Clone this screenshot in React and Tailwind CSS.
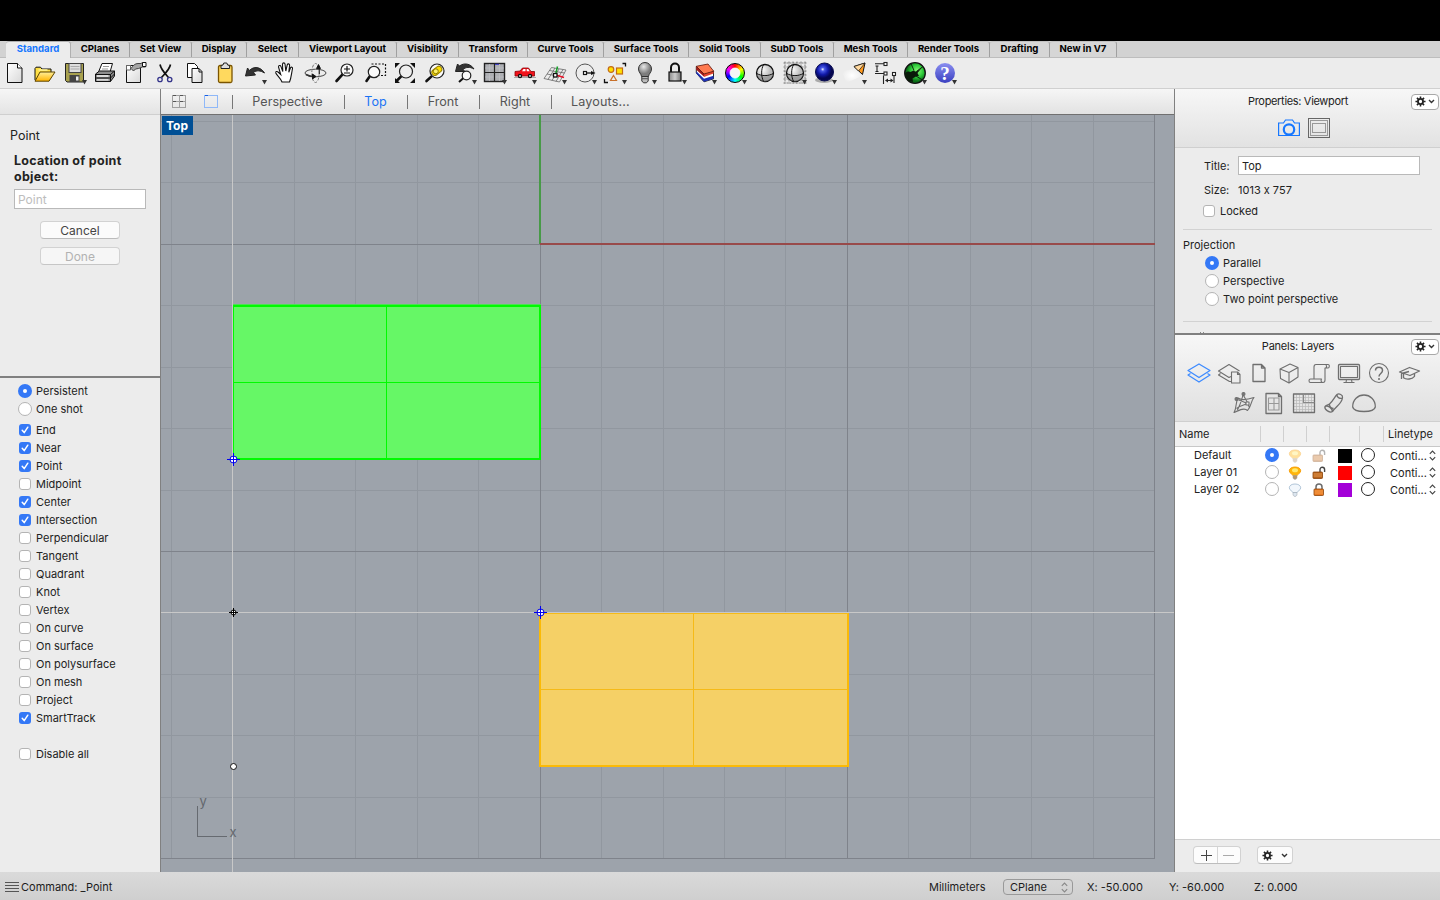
import React from "react";

const FONT = "font-['Inter','Liberation_Sans',sans-serif] [font-feature-settings:'calt'_0]";

/* ---------- toolbar glyphs, each drawn on a 30x30 cell ---------- */
const Drop = () => <path d="M22 22h5l-2.500 4.500z" fill="#333" />;
const Lens = ({ cx = 16, cy = 13, r = 6.300, fill = "#fafafa" }) => (
  <g>
    <path d={`M${cx - r * 0.700} ${cy + r * 0.700}L6.500 23`} stroke="#111" strokeWidth="2.600" strokeLinecap="round" />
    <circle cx={cx} cy={cy} r={r} fill={fill} stroke="#222" strokeWidth="1.200" />
  </g>
);
const Ball = () => (
  <g>
    <circle cx="15" cy="15" r="8.500" fill="url(#ballG)" stroke="#111" strokeWidth="1.300" />
    <path d="M7 16.500c5 2.500 11 2.500 16 0-.8 4-4 7-8 7s-7.200-3-8-7z" fill="#8c8c8c" opacity=".6" />
    <path d="M13.500 6.600c-2.500 5-2.500 11.500 0 16.800M6.700 15.500c5 2.800 11.500 2.800 16.600 0" stroke="#111" fill="none" strokeWidth="1" />
  </g>
);

const tools = [
  <g><path d="M7.500 5.500h10l4.500 4.500v14.500h-14.500z" fill="url(#pageG)" stroke="#111" /><path d="M17.500 5.500v4.500h4.500" fill="#fff" stroke="#111" /></g>,
  <g><path d="M5 22V10.500l1-1.300h4.500l1.500 1.800h9v4" fill="#ffe045" stroke="#111" /><path d="M5 23.200l5-9.200h15l-6 9.200z" fill="url(#foldG)" stroke="#5a4300" strokeLinejoin="round" /><path d="M8.500 12h9" stroke="#fff59a" strokeWidth="1.500" /></g>,
  <g><path d="M5.500 5.500h18v18.500H7L5.500 22.500z" fill="#a8a14f" stroke="#222" /><rect x="9" y="5.500" width="12" height="9" fill="#dedede" stroke="#444" /><path d="M10.500 8.500h9M10.500 11h9" stroke="#aaa" /><rect x="9.500" y="17" width="10" height="7" fill="#444" /><rect x="16" y="18.500" width="2.500" height="4" fill="#eee" /><Drop /></g>,
  <g><path d="M8.500 14l3.500-8.500h10.500l-2.500 8.500z" fill="#fff" stroke="#111" /><path d="M13 8.500h6M12 11h6" stroke="#999" /><path d="M5.500 16l4-3h15v5l-4 5.500h-15z" fill="#8d8d8d" stroke="#111" /><path d="M5.500 16.500h15l4-3.500M20.500 16.500v7M5.500 20h15l4-4" stroke="#111" fill="none" /><path d="M7 18h11.500M7 21.800h11.500" stroke="#f5f5f5" strokeWidth="1.300" /></g>,
  <g><path d="M6.500 7.500h14v17h-14z" fill="url(#pageG)" stroke="#111" /><path d="M6.500 7.500h4v4.500h-4z" fill="#fff" stroke="#666" /><path d="M11 10.500c2-3 4-5 7-5h3l1.500-1h3v4.500h-3l-4 1.500-3 .5-2 2z" fill="#a5a5a5" stroke="#444" /><path d="M22.500 4.500h3.500v4h-3.500z" fill="#fff" stroke="#111" /></g>,
  <g fill="none"><path d="M10 6.500c1 5 4.500 8.500 8.500 13M20.500 6.500c-1 5-5 8.500-9 13" stroke="#111" strokeWidth="1.700" /><circle cx="10" cy="21.500" r="2.200" stroke="#34348a" strokeWidth="1.300" /><circle cx="19.700" cy="21.500" r="2.200" stroke="#34348a" strokeWidth="1.300" /></g>,
  <g><path d="M7.500 5.500h7l3 3v11h-10z" fill="#fff" stroke="#111" /><path d="M12 10.500h7l3 3v11h-10z" fill="url(#pageG)" stroke="#111" /><path d="M19 10.500v3.500h3" fill="none" stroke="#111" /></g>,
  <g><rect x="8.500" y="7.500" width="13.500" height="17" rx="1.500" fill="#ffd95e" stroke="#7b5500" strokeWidth="1.300" /><path d="M11 10.500V7.500l2-.5.800-2h3l.8 2 2 .5v3z" fill="#ddd" stroke="#222" /></g>,
  <g><path d="M5.500 18l2-8 2 2.500c4-4.500 11-4 15 2.500-4-2.500-8-3-11-.5l2 2.500z" fill="#333" stroke="#222" /><Drop /></g>,
  <g><path d="M12 24c-1-3.500-5-6.500-6.200-9-.4-1.400 1.200-2 2.200-1l2.700 2.500L8.500 9c0-1.700 2-2 2.500-.4l1.800 5L12.500 6c.2-1.500 2.300-1.500 2.500 0l.8 7 1.500-6.300c.5-1.400 2.400-1 2.300.5l-.8 7 1.700-4.500c.7-1.200 2.300-.5 2 .8-1 4.500-1.200 9.500-3 13.500z" fill="#fff" stroke="#111" strokeWidth="1.100" /></g>,
  <g fill="none" stroke="#333"><ellipse cx="15.500" cy="15" rx="10.500" ry="3.800" strokeWidth=".9" /><ellipse cx="15.500" cy="15" rx="3.700" ry="9.500" stroke="#777" strokeDasharray="3 1.500" /><path d="M6 16.500c3 1.800 6 2.200 9 2.200" strokeWidth="1.500" /><path d="M12.500 16v5l3.500-2.500zM18.500 6.500l2 4h-4zM19.300 10v6" fill="#111" stroke="#111" strokeWidth=".9" /></g>,
  <g><Lens cx={17} cy={12} r={6} /><path d="M14 11h6M17 8v5.500M14 15h6" stroke="#111" strokeWidth="1.200" /></g>,
  <g><path d="M11.500 6h14v11.500H14" fill="none" stroke="#111" strokeDasharray="2 1.500" strokeWidth="1.200" /><Lens cx={14} cy={14} r={5.700} /></g>,
  <g><path d="M5 10V5h5zM20 5h5v5zM5 20v5h5zM25 20v5h-5z" fill="#111" /><Lens cx={16} cy={13.500} r={6.500} fill="#eee" /></g>,
  <g><Lens cx={17} cy={13} r={7} /><rect x="11.500" y="9.800" width="11" height="6" rx="3" fill="#ffe000" stroke="#9a8200" transform="rotate(-38 17 13)" /><circle cx="15.800" cy="13.300" r="2.500" fill="#fff36b" stroke="#8f7a00" /></g>,
  <g><path d="M5.500 13.500l2-7.500 2 2c4.500-3.500 11-2.500 14.500 3-4.500-2.500-8-2-11 .5l2 2z" fill="#333" stroke="#222" /><path d="M13.500 20l-4.500 4" stroke="#111" strokeWidth="2" /><circle cx="16.500" cy="17.500" r="4.300" fill="#fafafa" stroke="#222" strokeWidth="1.200" /><Drop /></g>,
  <g><rect x="4.500" y="5.500" width="20" height="18" fill="#aeb0b4" stroke="#222" strokeWidth="1.400" /><path d="M9.500 6v17M19.500 6v17M5 10h19M5 19h19" stroke="#c0c2c6" strokeWidth=".7" /><path d="M14.500 5.500v18M4.500 14.500h20" stroke="#222" strokeWidth="1.200" /><path d="M15 6.300h4" stroke="#3434d0" /><Drop /></g>,
  <g><path d="M4 19.500h22" stroke="#aaa" /><path d="M5 18v-4.500l5-.5 2.500-3h6l2.500 3.500h3.500V18z" fill="#f1121b" stroke="#8d0005" strokeWidth=".8" /><path d="M12 13.200l1.500-2.200h2v2.200zM16.700 11h1.500l1.500 2.200h-3z" fill="#fff" /><circle cx="10" cy="18" r="2.200" fill="#111" /><circle cx="20" cy="18" r="2.200" fill="#111" /><circle cx="10" cy="18" r=".9" fill="#ddd" /><circle cx="20" cy="18" r=".9" fill="#ddd" /><Drop /></g>,
  <g fill="none"><path d="M11.500 9.500L26 12l-6.500 12L4 20.500zM9.500 12.500l15 2.500M7 16l15.500 3M15 10l-7 11.500M19 11l-7 11.500M23 11.500L16 23.500" stroke="#666" strokeWidth=".8" /><path d="M15.500 17l2-8.500" stroke="#16a12a" strokeWidth="1.500" /><path d="M16 17l8 2.500" stroke="#e8142a" strokeWidth="1.600" /><rect x="13.500" y="15.500" width="3.500" height="3.500" fill="#fff" stroke="#111" strokeWidth="1.300" /><Drop /></g>,
  <g><circle cx="15" cy="15" r="9" fill="none" stroke="#555" /><rect x="13.500" y="13.500" width="3" height="3" fill="#fff" stroke="#111" strokeWidth="1.200" /><path d="M17 15h5" stroke="#111" strokeWidth="1.300" /><path d="M21 13l4.500 2-4.500 2z" fill="#111" /><Drop /></g>,
  <g fill="none"><path d="M22.500 5.500h3v3M4.500 21v3.500h3.500" stroke="#111" strokeWidth="1.300" /><circle cx="11" cy="11.500" r="2.800" fill="#ffe000" stroke="#c36a14" strokeWidth="1.200" /><rect x="16.500" y="10" width="6" height="6" fill="#ffe000" stroke="#c36a14" strokeWidth="1.200" /><path d="M13.500 17.500l3 5h-6z" stroke="#c8702a" strokeWidth="1.200" /><Drop /></g>,
  <g><path d="M11.500 18.500c0-2.500-3-4-3-7.500a6.500 6.500 0 0113 0c0 3.500-3 5-3 7.500z" fill="url(#bulbG)" stroke="#333" /><path d="M11.800 18.500h6.400v4.500l-1.700 1.800h-3l-1.700-1.800z" fill="#bbb" stroke="#333" /><path d="M12 20.700h6" stroke="#555" /><Drop /></g>,
  <g><path d="M11 14v-4.500a4 4 0 018 0V14" fill="none" stroke="#111" strokeWidth="2" /><rect x="9" y="14" width="12" height="9" fill="url(#lockG)" stroke="#111" strokeWidth="1.200" /><Drop /></g>,
  <g strokeLinejoin="round"><path d="M6.300 8.500v6.500l7.700 8.800 9.500-3V13l-9.500 3z" fill="#fff" stroke="#111" strokeWidth=".9" /><path d="M6.300 8.500v3.200l7.700 7 .3-2.800z" fill="#a31919" /><path d="M14 16l9.500-2.800v2.300L14 19z" fill="#e3402c" /><path d="M6.300 13.300l7.700 7.400 9.500-3v3L14 23.800 6.300 15.500z" fill="#1d2fb5" /><path d="M6.300 8.300L18 6l5.700 7.200L14 16z" fill="#ff7a50" stroke="#5a1208" strokeWidth=".8" /><Drop /></g>,
  <g><foreignObject x="5" y="5" width="20" height="20"><div className="h-5 w-5 rounded-full border border-black bg-[conic-gradient(red,#ff0,#0f0,#0ff,#00f,#f0f,red)]" /></foreignObject><circle cx="15" cy="15" r="5" fill="#f6f6f6" stroke="#fff" strokeWidth=".8" /><Drop /></g>,
  <Ball />,
  <g><path d="M5 3.500v22M9 3.500v22M13 3.500v22M17 3.500v22M21 3.500v22M25 3.500v22M3.500 5h23M3.500 9h23M3.500 13h23M3.500 17h23M3.500 21h23M3.500 25h23" stroke="#666" strokeWidth=".8" strokeDasharray="2 1" /><Ball /><Drop /></g>,
  <g><ellipse cx="14" cy="22" rx="9" ry="3" fill="#aaa" /><circle cx="14.500" cy="14" r="9" fill="url(#blueG)" stroke="#060a50" /><Drop /></g>,
  <g><path d="M20 10L2 13l4 12 16-7z" fill="url(#beamG)" /><path d="M14 8.500l11-3.500-2.500 11.500z" fill="#ff9a1e" stroke="#111" strokeLinejoin="round" /><path d="M14 8.500l11-3.500-6.500 8z" fill="#ffd9a0" stroke="#111" strokeWidth=".7" /><Drop /></g>,
  <g fill="none" stroke="#222" strokeWidth="1.100"><path d="M5 5.800h9M5 15.500h10M7 8v5.500M5.500 8h3M5.500 13.500h3M13.500 17.500V26M24 17.500V25M16 22.500h6" /><rect x="14" y="4.500" width="3" height="3" fill="#fff" /><rect x="14" y="14" width="3" height="3" fill="#fff" /><rect x="22.500" y="14.500" width="3" height="3" fill="#fff" /><path d="M18 20.500l-3 2 3 2zM20.500 20.500l3 2-3 2z" fill="#222" stroke="none" /></g>,
  <g><circle cx="15" cy="15" r="10.300" fill="url(#greenG)" stroke="#111" strokeWidth="1.300" /><path d="M5 15c1.500-1.500 4-2 5.500-1l3-1.500 2.500 1.500 6-4.500-4.500 5.500 1.500 3-3 .5c-1 1-2.500 1-3.500 2l.5 3.500-4.500-1c-2-2-3.500-5-3.500-8z" fill="#0a1a0a" /><path d="M11 5.500l3 7M23 8.500l-8 6M16 18l6.500 4" stroke="#0a1a0a" strokeWidth=".9" /><Drop /></g>,
  <g><circle cx="15" cy="15" r="10" fill="url(#helpG)" /><text x="15" y="21.500" textAnchor="middle" fontSize="19" fontWeight="bold" fill="#fff" fontFamily="Liberation Serif, serif">?</text><Drop /></g>,
];

const Defs = () => (
  <svg className="absolute h-0 w-0">
    <defs>
      <linearGradient id="pageG" x2="1" y2="1"><stop stopColor="#fff" /><stop offset="1" stopColor="#d8d8d8" /></linearGradient>
      <linearGradient id="foldG" x2="0" y2="1"><stop stopColor="#fff09a" /><stop offset="1" stopColor="#ffb400" /></linearGradient>
      <linearGradient id="lockG" x2="1"><stop stopColor="#8a8a8a" /><stop offset=".5" stopColor="#ccc" /><stop offset="1" stopColor="#777" /></linearGradient>
      <radialGradient id="bulbG" cx=".4" cy=".3"><stop stopColor="#e8e8e8" /><stop offset="1" stopColor="#7d7d7d" /></radialGradient>
      <radialGradient id="ballG" cx=".35" cy=".3"><stop stopColor="#fff" /><stop offset="1" stopColor="#bbb" /></radialGradient>
      <radialGradient id="blueG" cx=".4" cy=".35"><stop stopColor="#f3f6ff" /><stop offset=".2" stopColor="#4a5be8" /><stop offset=".6" stopColor="#1019a8" /><stop offset="1" stopColor="#04064e" /></radialGradient>
      <radialGradient id="beamG"><stop stopColor="#fff" /><stop offset="1" stopColor="#ececec" /></radialGradient>
      <radialGradient id="greenG" cx=".6" cy=".4"><stop stopColor="#8dff7a" /><stop offset=".6" stopColor="#2cc838" /><stop offset="1" stopColor="#0b6d18" /></radialGradient>
      <linearGradient id="helpG" x2="0" y2="1"><stop stopColor="#8a8ef0" /><stop offset="1" stopColor="#3a3fc0" /></linearGradient>
    </defs>
  </svg>
);

/* ---------- ribbon tabs ---------- */
const tabs = [
  ["Standard", "w-[65px]"], ["CPlanes", "w-[59px]"], ["Set View", "w-[62px]"], ["Display", "w-[55px]"],
  ["Select", "w-[52px]"], ["Viewport Layout", "w-[98px]"], ["Visibility", "w-[62px]"], ["Transform", "w-[69px]"],
  ["Curve Tools", "w-[76px]"], ["Surface Tools", "w-[85px]"], ["Solid Tools", "w-[72px]"], ["SubD Tools", "w-[73px]"],
  ["Mesh Tools", "w-[74px]"], ["Render Tools", "w-[82px]"], ["Drafting", "w-[60px]"], ["New in V7", "w-[67px]"],
];

const TabBar = () => (
  <div className="flex h-[17px] border-b border-[#bdbdbd] bg-[#d2d2d2] pl-[6px]">
    {tabs.map(([t, w], i) => (
      <div
        key={t}
        className={`${w} flex shrink-0 items-start justify-center whitespace-nowrap rounded-t-[3px] border-r border-t text-[9.600px] font-bold leading-[14px] ${
          i === 0 ? "h-[17px] border-[#b0b0b0] bg-[#ececec] text-[#1677ff]" : "h-4 border-t-[#c2c2c2] border-r-[#a0a0a0] bg-[#d6d6d6] text-black"
        }`}
      >
        {t}
      </div>
    ))}
  </div>
);

const Toolbar = () => (
  <div className="flex h-[31px] border-b border-[#d0d0d0] bg-[#ececec]">
    {tools.map((g, i) => (
      <svg key={i} className="h-[30px] w-[30px] shrink-0" viewBox="0 0 30 30" fill="none">{g}</svg>
    ))}
  </div>
);

/* ---------- form controls ---------- */
const Radio = ({ on, className = "" }) => (
  <span className={`flex h-[14px] w-[14px] shrink-0 items-center justify-center rounded-full ${on ? "bg-[#3478f6]" : "border border-[#b4b4b4] bg-white"} ${className}`}>
    {on && <span className="h-1 w-1 rounded-full bg-white" />}
  </span>
);
const Check = ({ on }) => (
  <span className={`flex h-3 w-3 shrink-0 items-center justify-center rounded-[3px] ${on ? "bg-[#3478f6]" : "border border-[#b4b4b4] bg-white"}`}>
    {on ? (
      <svg className="h-3 w-3" viewBox="0 0 12 12" fill="none"><path d="M3.200 6.300l2 2.300 3.600-5.400" stroke="#fff" strokeWidth="1.500" strokeLinecap="round" strokeLinejoin="round" /></svg>
    ) : null}
  </span>
);
const Gear = ({ className = "" }) => (
  <svg className={`h-[11px] w-[11px] ${className}`} viewBox="0 0 12 12" fill="none" stroke="#222">
    <circle cx="6" cy="6" r="2.800" strokeWidth="2" />
    <path d="M6 .5v2M6 9.500v2M.5 6h2M9.500 6h2M2.100 2.100l1.500 1.500M8.400 8.400l1.500 1.500M2.100 9.900l1.500-1.500M8.400 3.600l1.500-1.500" strokeWidth="1.700" />
  </svg>
);
const Chev = () => (
  <svg className="h-[5px] w-[7px]" viewBox="0 0 7 5" fill="none"><path d="M1 1l2.500 2.500L6 1" stroke="#333" strokeWidth="1.400" /></svg>
);
const GearMenu = () => (
  <span className="flex h-[16px] w-[28px] items-center justify-center gap-[2px] rounded-[4px] border border-[#a8a8a8] bg-white pr-px"><Gear /><Chev /></span>
);
const UpDown = ({ className = "" }) => (
  <svg className={`h-[11px] w-[7px] shrink-0 ${className}`} viewBox="0 0 7 11" fill="none" stroke="currentColor" strokeWidth="1.100"><path d="M.8 3.800L3.500 1l2.700 2.800M.8 7.200L3.500 10l2.700-2.800" /></svg>
);

/* ---------- left sidebar ---------- */
const snaps = [
  ["End", true], ["Near", true], ["Point", true], ["Midpoint", false], ["Center", true], ["Intersection", true], ["Perpendicular", false],
  ["Tangent", false], ["Quadrant", false], ["Knot", false], ["Vertex", false], ["On curve", false], ["On surface", false],
  ["On polysurface", false], ["On mesh", false], ["Project", false], ["SmartTrack", true],
];

const SnapRow = ({ label, on }) => (
  <div className="flex h-[18px] items-center gap-[5px] pl-[19px] text-[11px]"><Check on={on} />{label}</div>
);

const LeftSide = () => (
  <aside className="flex w-[161px] shrink-0 flex-col border-r border-[#808080] bg-[#ececec] text-[#222]">
    <div className="h-[26px] shrink-0 border-b border-[#cfcfcf] bg-gradient-to-b from-[#f6f6f6] to-[#e4e4e4]" />
    <div className="flex h-[261px] shrink-0 flex-col">
      <div className="mt-[13px] h-4 pl-[10px] text-[12.500px] leading-4">Point</div>
      <div className="mt-[9px] pl-[14px] text-[12.500px] font-bold leading-4 tracking-[0.280px]">Location of point<br />object:</div>
      <div className="ml-[14px] mt-1 flex h-5 w-[132px] items-center border border-[#b9b9b9] bg-white pl-[3px] pt-px text-[12px] text-[#bdbdbd]">Point</div>
      <div className="mt-3 flex flex-col items-center gap-2 text-[12px] text-[#444]">
        <button className="h-[18px] w-20 rounded-[4px] border border-[#d2d2d2] border-b-[#bcbcbc] bg-[#fbfbfb] pt-px leading-4">Cancel</button>
        <button className="h-[18px] w-20 rounded-[4px] border border-[#d2d2d2] border-b-[#c6c6c6] bg-[#f6f6f6] pt-px leading-4 text-[#b2b2b2]">Done</button>
      </div>
    </div>
    <div className="h-[2px] shrink-0 bg-[#808080]" />
    <div className="flex flex-col pt-1">
      {["Persistent", "One shot"].map((t, i) => (
        <div key={t} className="flex h-[18px] items-center gap-1 pl-[18px] text-[11px]"><Radio on={i === 0} />{t}</div>
      ))}
      <div className="h-[3px]" />
      {snaps.map(([t, on]) => <SnapRow key={t} label={t} on={on} />)}
      <div className="h-[18px]" />
      <SnapRow label="Disable all" on={false} />
    </div>
  </aside>
);

/* ---------- viewport ---------- */
const minorX = [10, 133, 194, 256, 317, 440, 502, 563, 624, 747, 809, 870, 932];
const minorY = [6, 67, 190, 252, 313, 375, 497, 559, 620, 682];

const Snap = ({ x, y, c, r, a }) => (
  <g stroke={c} fill="none" shapeRendering="crispEdges">
    <circle cx={x} cy={y} r={r} fill="#fff" shapeRendering="auto" />
    <path d={`M${x - a} ${y}h${2 * a}M${x} ${y - a}v${2 * a}`} />
  </g>
);

const Viewport = () => (
  <div className="relative h-[757px] overflow-hidden bg-[#9da3ab]">
    <svg className="block h-[757px] w-[1013px]" viewBox="0 0 1013 757" fill="none">
      <g shapeRendering="crispEdges">
        {minorX.map((x) => <path key={x} d={`M${x + 0.5} 0V744`} stroke="#91979f" />)}
        {minorY.map((y) => <path key={y} d={`M0 ${y + 0.5}H994`} stroke="#91979f" />)}
        <path d="M0 129.500H994M0 436.500H994M0 743.500H994M379.500 0V744M686.500 0V744M993.500 0V744" stroke="#7f838b" />
        <path d="M379 0V129" stroke="#479a47" strokeWidth="2" />
        <path d="M379 129H994" stroke="#984a4a" strokeWidth="2" />
        <path d="M0 497.500H1013M71.500 0V757" stroke="#c8c8c8" />
        <path d="M72 190H380V345H72z" fill="#66f766" />
        <path d="M72 189.500H379.500" stroke="#4be052" />
        <path d="M72 191H379V344H72" stroke="#00fa00" strokeWidth="2" />
        <path d="M379.500 190V345" stroke="#00fa00" />
        <path d="M72.500 190V345M72 267.500H380M225.500 190V344" stroke="#00fa00" />
        <path d="M379 498H687V652H379z" fill="#f5d066" />
        <path d="M379 498V651H686.500V498" stroke="#fbba06" strokeWidth="2" />
        <path d="M379 498.500H687M379 574.500H687M532.500 498V652" stroke="#f5ba18" />
        <path d="M36.500 691V721.500H66" stroke="#666a70" />
      </g>
      <Snap x={72.500} y={344.500} c="#0000f0" r={3.500} a={6.500} />
      <Snap x={379.500} y={497.500} c="#0000f0" r={3.500} a={6.500} />
      <Snap x={72.500} y={497.500} c="#000" r={2.500} a={4.500} />
      <circle cx="72.500" cy="651.500" r="3" fill="#fff" stroke="#111" />
      <text x="38.500" y="691" fontSize="13" fill="#63676d" fontFamily="Inter, sans-serif">y</text>
      <text x="68.500" y="722" fontSize="13" fill="#63676d" fontFamily="Inter, sans-serif">x</text>
    </svg>
    <div className="absolute left-px top-px flex h-[19px] w-[31px] items-center justify-center bg-[#004f95] pr-px text-[12px] font-bold text-white">Top</div>
  </div>
);

const Sep = () => <span className="h-[14px] w-px shrink-0 bg-[#777]" />;

const Center = () => (
  <main className="flex w-[1013px] shrink-0 flex-col">
    <div className="flex h-[26px] shrink-0 items-center border-b border-[#707070] bg-gradient-to-b from-[#f6f6f6] to-[#e2e2e2] text-[12.600px] text-[#555]">
      <span className="flex w-[71px] shrink-0 items-center gap-[18px] pl-[11px]">
        <svg className="h-[14px] w-[14px]" viewBox="0 0 14 14" fill="none" shapeRendering="crispEdges"><path d="M.5.5h13v12H.5zM7 .5v12M.5 6.500h13" stroke="#a0a0a0" /><path d="M.5.500h3M7.500.500h3M.5 6.500h3M7.500 6.500h3" stroke="#555" /></svg>
        <svg className="h-[14px] w-[14px]" viewBox="0 0 14 14" fill="none" shapeRendering="crispEdges"><path d="M.5.500h13v12H.5z" stroke="#8fb8f8" /><path d="M.5.500h3" stroke="#1a5fe0" /></svg>
      </span>
      <Sep />
      <span className="w-[111px] pr-[2px] pt-[2px] text-center">Perspective</span><Sep />
      <span className="w-[62px] pr-px pt-[2px] text-center text-[#1a73f5]">Top</span><Sep />
      <span className="w-[71px] pr-px pt-[2px] text-center">Front</span><Sep />
      <span className="w-[71px] pr-px pt-[2px] text-center">Right</span><Sep />
      <span className="pl-[19px] pt-[2px] tracking-[0.150px]">Layouts...</span>
    </div>
    <Viewport />
  </main>
);

/* ---------- right panels ---------- */
const P = ({ children, c = "#6f6f6f" }) => (
  <svg className="h-6 w-[30px] shrink-0" viewBox="0 0 30 24" fill="none" stroke={c} strokeWidth="1.100" strokeLinejoin="round">{children}</svg>
);

const Properties = () => (
  <section className="flex h-[244px] shrink-0 flex-col overflow-hidden text-[11px]">
    <div className="flex h-[59px] shrink-0 flex-col border-b border-[#cfcfcf] bg-gradient-to-b from-[#f7f7f7] to-[#e2e2e2]">
      <div className="flex h-[25px] items-center pr-px">
        <span className="flex-1 pl-[10px] text-center tracking-[-0.330px]">Properties: Viewport</span><GearMenu />
      </div>
      <div className="flex items-center gap-[8px] pl-[103px] pt-[4px]">
        <svg className="h-[18px] w-[22px]" viewBox="0 0 22 18" fill="none" stroke="#1677ff"><path d="M.600 4h4.900l2-3h7l2 3h4.900v12.500H.600z" strokeWidth="1.200" /><circle cx="11" cy="10.500" r="5.200" strokeWidth="2.200" /></svg>
        <svg className="h-5 w-[22px]" viewBox="0 0 22 20" fill="none" shapeRendering="crispEdges"><path d="M.5.500h21v19H.5z" stroke="#666" /><path d="M2.500 2.500h17v15h-17z" stroke="#999" /><path d="M4.500 5.500h13v9h-13z" stroke="#999" /></svg>
      </div>
    </div>
    <div className="flex flex-col">
      <div className="mt-2 flex h-[19px] items-center"><span className="w-[63px] pl-[29px] pt-px">Title:</span><span className="flex h-[19px] w-[182px] items-center border border-[#b9b9b9] bg-white pl-[3px] pt-px">Top</span></div>
      <div className="mt-[7px] flex h-4 items-center"><span className="w-[63px] pl-[29px]">Size:</span>1013 x 757</div>
      <div className="mt-[5px] flex h-4 items-center gap-[5px] pl-7"><Check />Locked</div>
      <div className="mx-2 mt-[10px] h-px bg-[#d2d2d2]" />
      <div className="mt-[7px] h-4 pl-2 leading-4">Projection</div>
      <div className="mt-[1px] flex flex-col">
        {["Parallel", "Perspective", "Two point perspective"].map((t, i) => (
          <div key={t} className="flex h-[18px] items-center gap-1 pl-[30px]"><Radio on={i === 0} />{t}</div>
        ))}
      </div>
      <div className="mx-2 mt-[13px] h-px bg-[#d2d2d2]" />
      <div className="mt-[10px] flex gap-[2px] pl-[25px]"><span className="h-px w-px bg-[#888]" /><span className="h-px w-px bg-[#888]" /></div>
    </div>
  </section>
);

const layers = [
  ["Default", true, "bg-black", "opacity-40", false],
  ["Layer 01", false, "bg-[#ff0000]", "", false],
  ["Layer 02", false, "bg-[#a300d8]", "", true],
];

const LayerBulb = ({ off, dim }) => (
  <svg className={`h-[14px] w-[14px] ${dim}`} viewBox="0 0 14 14" fill="none">
    <path d="M4.800 9.500C4.800 8 1.300 7.500 1.300 4.800 1.300 2.300 4 1 7 1s5.700 1.300 5.700 3.800C12.700 7.500 9.200 8 9.200 9.500z" fill={off ? "#f2f7fc" : "#ffb60a"} stroke={off ? "#a9bfd4" : "#f79a00"} strokeWidth=".9" />
    {!off && <ellipse cx="7" cy="4.200" rx="3" ry="2" fill="#ffe96e" />}
    <path d="M5 9.500h4V12l-1 1.300H6L5 12z" fill={off ? "#dce6f0" : "#b9976a"} stroke="#9ba3ab" strokeWidth=".5" />
  </svg>
);
const LayerLock = ({ closed, dim }) => (
  <svg className={`h-[13px] w-[14px] ${dim}`} viewBox="0 0 14 13" fill="none">
    {closed ? <path d="M4 6V4a3 3 0 016 0v2" stroke="#6b6b6b" strokeWidth="1.500" /> : <path d="M8 6V3.500a2.300 2.300 0 014.600 0V6" stroke="#444" strokeWidth="1.400" />}
    <rect x={closed ? 2 : 1} y="6" width="9.500" height="6.500" rx=".8" fill={closed ? "#e87820" : "#b5621c"} stroke="#8a4308" strokeWidth=".8" />
    <path d={closed ? "M2.500 8h8.500M2.500 10h8.500" : "M1.500 8h8.500M1.500 10h8.500"} stroke="#f9b164" strokeWidth=".7" />
  </svg>
);

const Layers = () => (
  <section className="flex min-h-0 flex-1 flex-col text-[11px]">
    <div className="flex h-[87px] shrink-0 flex-col border-b border-[#cfcfcf] bg-gradient-to-b from-[#f7f7f7] to-[#e0e0e0]">
      <div className="flex h-[23px] items-center pr-px">
        <span className="flex-1 pl-[10px] text-center tracking-[-0.220px]">Panels: Layers</span><GearMenu />
      </div>
      <div className="mt-[3px] flex pl-[9px]">
        <P c="#3d8bff"><path d="M4 9.500l11-6.500 11 6.500-11 7z" strokeWidth="1.300" /><path d="M6.500 12.500L4 14l11 7 11-7-2.500-1.500" strokeWidth="1.300" /></P>
        <P><path d="M17 15.500l-2 1L4.500 10 15 3.500 25.500 10M6.500 12.500L4.500 14l11 6.500h1.500" /><path d="M17.500 11h6l2.500 2.500v8.500h-8.500z" fill="#eee" /><path d="M23.500 11v2.500h2.500" /></P>
        <P><path d="M9 3.500h8.500l3.500 3.500v13.500h-12zM17.500 3.500v3.500h3.500" strokeWidth="1.300" /></P>
        <P><path d="M6 8l10-5 8 3.500v9.500l-9 6-8.500-4.500zM6 8l9 3.500 9-5M15 11.500V22" /></P>
        <P><path d="M10 18V6c0-2 .8-2.500 2-2.500h12c2 0 1.500 3.500 0 3.500h-3v12c0 1.800-.8 2.500-2 2.500H6.500c-2 0-2-3.500 0-3.500h11c-1 1.800-.2 3.500 1.500 3.500M22 7c1-1 .5-2.500 0-3.500" /></P>
        <P><rect x="4.500" y="3.500" width="21" height="15" rx="1" strokeWidth="1.300" /><rect x="6.500" y="5.500" width="17" height="11" /><path d="M12.500 18.500l-.5 3h6l-.5-3M9.500 21.500h11" /></P>
        <P><circle cx="15" cy="12" r="9.500" /><path d="M11.500 9.500c0-4.500 7-4.500 7 0 0 3-3.500 3-3.500 6M15 17v2" strokeWidth="1.500" /></P>
        <P><path d="M5.500 11l10-4.500 10 3.500-9.500 4.500zM9.500 12.800v4c3 2.200 8.500 1.500 11-1.500v-3M15 10.500l-7.500 2v5.500" strokeWidth="1.300" /></P>
      </div>
      <div className="mt-[6px] flex pl-[54px]">
        <P><path d="M9 7c3 2.500 10 1.500 16-.5-3.500 4-2 8-6.500 13-3-3-8-.500-13.500 2 3-4.500 1-9 4-14.500zM14 3.500l5 9M7.500 8l11 4.500M14 3.500c-1 6-3 10-5.500 15.500M18.500 12.500c-3 1-7 2-11 5M18.500 12.500l2 4" /><circle cx="7.500" cy="8" r="1.500" fill="#777" /><circle cx="14.500" cy="3" r="1.500" fill="#777" /><rect x="17" y="11" width="3" height="3" fill="#eee" /></P>
        <P><path d="M7 2.500h12.500l3 3v17h-15.500zM19.500 2.500v3h3" strokeWidth="1.300" /><path d="M9.500 7h10.500v12h-10.500zM15 7v12M9.500 12.500h10.500" stroke="#999" /></P>
        <P><path d="M7.500 3.500v18M10.500 3.500v18M13.500 3.500v18M16.500 3.500v18M19.500 3.500v18M22.500 3.500v18M4.500 6.500h21M4.500 9.500h21M4.500 12.500h21M4.500 15.500h21M4.500 18.500h21" stroke="#b8b8b8" strokeWidth=".7" /><path d="M4.500 3h21v18.500h-21z" strokeWidth="1.300" /><path d="M14.500 3.500v8h11" stroke="#888" /></P>
        <P><path d="M18 3.500c2-1.500 6 .5 5.500 3-.5 6-6 8.500-10 14-2.500 2-8.500-2-7.500-5 1-1.500 3-1 4.500-2.500 3.500-3 5-7 7.500-9.500zM18 4c0 2.500 3 4 5.500 3M10.500 13.500c0 2 1.500 3.500 4 4M6 15.500c3-1 7 1 7.500 5" strokeWidth="1.300" /></P>
        <P><path d="M3.700 16C3.500 8.500 9 4 15 4s11.500 4.500 11.300 12C25 22 5 22 3.700 16z" strokeWidth="1.300" /></P>
      </div>
    </div>
    <div className="flex h-[25px] shrink-0 items-center border-b border-[#c8c8c8] bg-[#f0f0f0]">
      <span className="w-[85px] pl-1">Name</span>
      <span className="h-4 w-[23px] border-l border-[#d0d0d0]" />
      <span className="h-4 w-[23px] border-l border-[#d0d0d0]" />
      <span className="h-4 w-[23px] border-l border-[#d0d0d0]" />
      <span className="h-4 w-[30px] border-l border-[#d0d0d0]" />
      <span className="h-4 w-[24px] border-l border-[#d0d0d0]" />
      <span className="flex h-4 items-center border-l border-[#d0d0d0] pl-1">Linetype</span>
    </div>
    <div className="min-h-0 flex-1 bg-white">
      {layers.map(([name, cur, col, dim, locked]) => (
        <div key={name} className="flex h-[17px] items-center">
          <span className="w-[85px] pl-[19px]">{name}</span>
          <span className="flex w-[23px] justify-center"><Radio on={cur} className="mb-px" /></span>
          <span className="flex w-[24px] justify-center"><LayerBulb off={locked} dim={dim} /></span>
          <span className="flex w-[23px] justify-center"><LayerLock closed={locked} dim={dim} /></span>
          <span className="flex w-[30px] justify-center"><span className={`mt-px h-[14px] w-[14px] ${col}`} /></span>
          <span className="flex w-[17px] justify-center"><span className="mb-px mr-px h-[14px] w-[14px] shrink-0 rounded-full border border-[#222]" /></span>
          <span className="w-[51px] pl-[13px] pt-px leading-[14px]">Conti...</span>
          <UpDown className="mb-px ml-px text-[#444]" />
        </div>
      ))}
    </div>
    <div className="flex h-[33px] shrink-0 items-center border-t border-[#d0d0d0] bg-[#ececec] pb-[2px] pl-[18px]">
      <span className="flex h-[18px] w-[48px] rounded-[4px] border border-[#d2d2d2] border-b-[#bdbdbd] bg-[#fcfcfc]">
        <span className="flex w-[24px] items-center justify-center border-r border-[#d6d6d6] pl-px"><svg className="h-[11px] w-[11px]" viewBox="0 0 11 11" shapeRendering="crispEdges"><path d="M5.500 0v11M0 5.500h11" stroke="#444" /></svg></span>
        <span className="flex flex-1 items-center justify-center pr-[2px]"><span className="h-px w-[11px] bg-[#aaa]" /></span>
      </span>
      <span className="ml-[16px] flex h-[18px] w-[36px] items-center justify-center gap-[8px] rounded-[4px] border border-[#d2d2d2] border-b-[#bdbdbd] bg-[#fcfcfc]"><Gear /><Chev /></span>
    </div>
  </section>
);

const Status = () => (
  <footer className="flex h-7 shrink-0 items-center bg-gradient-to-b from-[#dadada] to-[#cfcfcf] pb-px pl-[5px] pt-[3px] text-[11px] text-[#1c1c1c]">
    <svg className="h-[11px] w-[14px] shrink-0" viewBox="0 0 14 11" shapeRendering="crispEdges"><path d="M0 .5h14M0 3.500h14M0 6.500h14M0 9.500h14" stroke="#555" /></svg>
    <span className="w-[908px] pl-[2px]">Command: _Point</span>
    <span className="w-[76px] pl-[2px]">Millimeters</span>
    <span className="flex h-4 w-[70px] items-center justify-between rounded-[4px] border border-[#999] pl-[6px] pr-[4px]">CPlane<UpDown className="text-[#888]" /></span>
    <span className="w-[96px] pl-[14px]">X: -50.000</span>
    <span className="w-[85px]">Y: -60.000</span>
    <span>Z: 0.000</span>
  </footer>
);

export default function App() {
  return (
    <div className={`flex h-[900px] w-[1440px] flex-col overflow-hidden bg-[#ececec] text-[#222] ${FONT}`}>
      <Defs />
      <div className="h-[41px] shrink-0 bg-black" />
      <TabBar />
      <Toolbar />
      <div className="flex h-[783px] shrink-0">
        <LeftSide />
        <Center />
        <aside className="flex w-[266px] shrink-0 flex-col border-l border-[#808080] bg-[#ececec]">
          <Properties />
          <div className="h-[2px] shrink-0 bg-[#808080]" />
          <Layers />
        </aside>
      </div>
      <Status />
    </div>
  );
}
